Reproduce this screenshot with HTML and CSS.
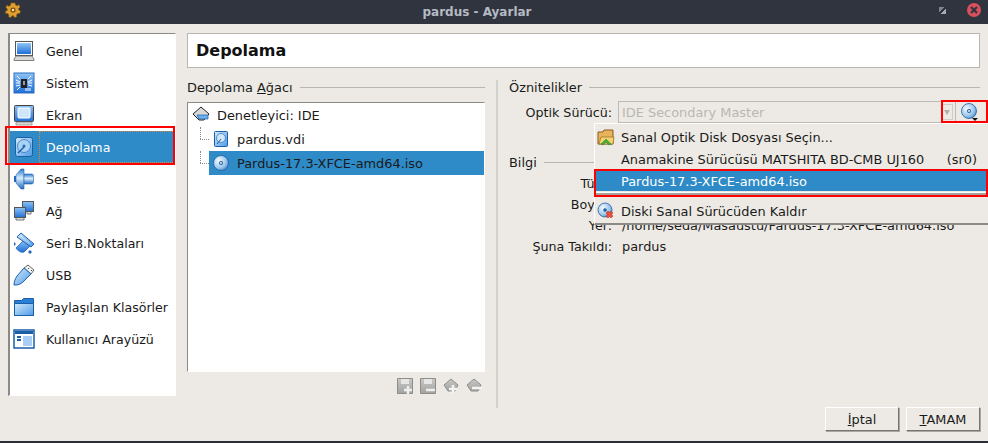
FILE: index.html
```html
<!DOCTYPE html>
<html lang="tr">
<head>
  <meta charset="UTF-8" />
  <title>pardus - Ayarlar</title>
  <link rel="stylesheet" href="styles.css">
</head>
<body>
  <svg class="defs" width="0" height="0">
    <defs>
      <linearGradient id="blue" x1="0" y1="0" x2="0" y2="1">
        <stop offset="0" stop-color="#8fc4f5"/>
        <stop offset="1" stop-color="#1f6fd8"/>
      </linearGradient>
      <linearGradient id="pale" x1="0" y1="0" x2="1" y2="1">
        <stop offset="0" stop-color="#d4ebfc"/>
        <stop offset="1" stop-color="#4d9ae6"/>
      </linearGradient>
      <linearGradient id="cone" x1="0" y1="0" x2="0" y2="1">
        <stop offset="0" stop-color="#2f78c8"/>
        <stop offset="0.45" stop-color="#d8eefc"/>
        <stop offset="1" stop-color="#2468bc"/>
      </linearGradient>
      <radialGradient id="disc" cx="0.35" cy="0.35" r="0.8">
        <stop offset="0" stop-color="#f4fbff"/>
        <stop offset="0.6" stop-color="#9cc7ec"/>
        <stop offset="1" stop-color="#3b78bf"/>
      </radialGradient>
      <linearGradient id="grey" x1="0" y1="0" x2="0" y2="1">
        <stop offset="0" stop-color="#c8c8c6"/>
        <stop offset="1" stop-color="#a2a2a0"/>
      </linearGradient>
    </defs>
  </svg>

  <header class="titlebar">
    <svg class="app-icon" width="16" height="16" viewBox="0 0 16 16">
      <path d="M6 1h4l.5 2 1.700.8 1.800-1 1 2.200-1.500 1.500.2 1.500 1.800 1-.8 2.500-2 0-1.200 1.300.3 2-2.300.7-1-1.700h-1.600l-1 1.700-2.300-.7.3-2-1.200-1.300-2 0L.4 9.500l1.800-1 .2-1.500L.9 5.500l1-2.200 1.800 1L5.500 3.500z" fill="#e0a030" stroke="#8a5a10" stroke-width=".6"/>
      <circle cx="8" cy="8" r="2.600" fill="#7a4a10"/>
      <circle cx="8" cy="8" r="1.300" fill="#fbe39a"/>
    </svg>
    <span class="win-title">pardus - Ayarlar</span>
    <span class="win-max"></span>
    <span class="win-close">
      <svg width="10" height="10" viewBox="0 0 10 10"><path d="M2 2l6 6M8 2l-6 6" stroke="#2f343f" stroke-width="2.200"/></svg>
    </span>
  </header>

  <main class="dialog">
    <nav class="sidebar">
      <div class="side-item">
        <svg class="side-icon" width="22" height="22" viewBox="0 0 22 22"><rect x="2.500" y="1.500" width="17" height="14" fill="#fff" stroke="#555"/><rect x="4" y="3" width="14" height="11" fill="url(#blue)"/><path d="M1 19l2-3h16l2 3v1.500H1z" fill="#d8d8d6" stroke="#666" stroke-width=".8"/></svg>
        <span>Genel</span>
      </div>
      <div class="side-item">
        <svg class="side-icon" width="22" height="22" viewBox="0 0 22 22"><rect x="1" y="1" width="20" height="20" fill="url(#blue)" stroke="#2b6cc0"/><path d="M3 8l4 2M3 11h4M3 14l4-1M15 10l4-2M15 11h4M15 13l4 1M4 4l3 3M18 4l-3 3M4 18l3-3M13 16v3M15 16v3M17 16v3" stroke="#fff"/><rect x="8" y="7" width="6" height="9" fill="#222"/><rect x="10" y="9" width="2" height="4" fill="#9a9a9a"/></svg>
        <span>Sistem</span>
      </div>
      <div class="side-item">
        <svg class="side-icon" width="22" height="22" viewBox="0 0 22 22"><rect x="1.500" y="1.500" width="19" height="16" rx="1" fill="url(#blue)" stroke="#444"/><rect x="5" y="4" width="12" height="10" rx="1" fill="#cfe6fb" stroke="#fff"/><rect x="3" y="18" width="16" height="3" fill="#d8d8d6" stroke="#777" stroke-width=".6"/></svg>
        <span>Ekran</span>
      </div>
      <div class="side-item selected">
        <svg class="side-icon" width="22" height="22" viewBox="0 0 22 22"><rect x="2.500" y="1.500" width="17" height="19" rx="2" fill="url(#pale)" stroke="#1a5ea8"/><circle cx="11" cy="10" r="6.500" fill="#a9d3f5" stroke="#256bb5" stroke-width=".7"/><circle cx="11" cy="10" r="1.500" fill="#256bb5"/><path d="M5 17l6-6" stroke="#1a5ea8" stroke-width="1.500"/></svg>
        <span class="side-label">Depolama</span>
      </div>
      <div class="side-item">
        <svg class="side-icon" width="22" height="22" viewBox="0 0 22 22"><path d="M1 8h2v6H1z" fill="#2468bc"/><path d="M3 7l5-6h3v20H8l-5-6z" fill="url(#cone)" stroke="#2468bc" stroke-width=".6"/><path d="M11 6h8a2 2 0 0 1 1.500 2v6a2 2 0 0 1-1.500 2h-8z" fill="url(#cone)" stroke="#2468bc" stroke-width=".6"/></svg>
        <span>Ses</span>
      </div>
      <div class="side-item">
        <svg class="side-icon" width="22" height="22" viewBox="0 0 22 22"><rect x="9.500" y="1.500" width="11" height="10" fill="url(#blue)" stroke="#555"/><rect x="1.500" y="7.500" width="11" height="10" fill="url(#blue)" stroke="#555"/><path d="M3 18v2h8v-2M14 12v2h4v-2" fill="#ddd" stroke="#777"/></svg>
        <span>Ağ</span>
      </div>
      <div class="side-item">
        <svg class="side-icon" width="22" height="22" viewBox="0 0 22 22"><path d="M3 16l8-8 6 6-6 6c-3 1-6-1-8-4z" fill="url(#blue)" stroke="#1f5fae" stroke-width=".8"/><path d="M8 1l13 11-3 3L4 5z" fill="url(#pale)" stroke="#1f5fae"/><path d="M8 4l9 8" stroke="#fff" stroke-dasharray="1 1.500"/><path d="M1 10l2 2-2 2zM15 20l2-2 2 2-2 2z" fill="#2468bc"/></svg>
        <span>Seri B.Noktaları</span>
      </div>
      <div class="side-item">
        <svg class="side-icon" width="22" height="22" viewBox="0 0 22 22"><path d="M15 1l6 5-3 4-7-6z" fill="#f2f2f0" stroke="#666"/><path d="M15 4l1 1M18 6l1 1" stroke="#444"/><path d="M11 4l7 6-8 8c-2 2-5 3-7 3l-2 0c0-3 1-6 3-9z" fill="url(#pale)" stroke="#1f5fae"/></svg>
        <span>USB</span>
      </div>
      <div class="side-item">
        <svg class="side-icon" width="22" height="22" viewBox="0 0 22 22"><path d="M1.500 19.500V4.500h7l2-2h10v17z" fill="#2a7fd6" stroke="#1a5ea8"/><path d="M1.500 7.500h19v12h-19z" fill="url(#pale)" stroke="#1a5ea8"/></svg>
        <span>Paylaşılan Klasörler</span>
      </div>
      <div class="side-item">
        <svg class="side-icon" width="22" height="22" viewBox="0 0 22 22"><rect x="1" y="2" width="20" height="18" fill="#fff" stroke="#1a5ea8" stroke-width="1.500"/><rect x="2" y="3" width="18" height="3" fill="#1a5ea8"/><rect x="10" y="8" width="9" height="10" fill="#a9cdf5"/><path d="M4 9h4M4 12h4" stroke="#1a5ea8" stroke-width="2"/></svg>
        <span>Kullanıcı Arayüzü</span>
      </div>
    </nav>

    <section class="page">
      <h1 class="page-title">Depolama</h1>
      <div class="panes">
        <div class="tree-pane">
          <div class="group-head"><span>Depolama <u>A</u>ğacı</span></div>
          <div class="tree">
            <div class="tree-row ctrl">
              <svg width="18" height="18" viewBox="0 0 18 18"><path d="M9 1l8 7-5 6H7L1 8z" fill="#d8d8d6" stroke="#222"/><path d="M5 9h11v4H7z" fill="#6ab0ee" stroke="#1a5ea8" stroke-width=".7"/></svg>
              <span>Denetleyici: IDE</span>
            </div>
            <div class="tree-row child">
              <svg width="16" height="18" viewBox="0 0 16 18"><rect x="1.500" y="1.500" width="13" height="15" rx="1" fill="url(#pale)" stroke="#1a5ea8"/><circle cx="8" cy="8" r="4.500" fill="#cfe6fb" stroke="#256bb5" stroke-width=".7"/><path d="M4 14l4-5" stroke="#1a5ea8"/></svg>
              <span>pardus.vdi</span>
            </div>
            <div class="tree-row child current">
              <svg width="16" height="16" viewBox="0 0 16 16"><circle cx="8" cy="8" r="7.500" fill="url(#disc)" stroke="#235e9e" stroke-width=".8"/><circle cx="8" cy="8" r="2" fill="#235e9e"/><circle cx="8" cy="8" r=".9" fill="#fff"/></svg>
              <span>Pardus-17.3-XFCE-amd64.iso</span>
            </div>
          </div>
          <div class="tree-tools">
            <svg width="16" height="16" viewBox="0 0 16 16"><path d="M.5.5h15v15H.5z" fill="url(#grey)" stroke="#8d8d8b"/><rect x="4" y="1" width="8" height="5" fill="#e6e6e4"/><path d="M7 12h8M11 8v8" stroke="#efefed" stroke-width="2.500"/></svg>
            <svg width="16" height="16" viewBox="0 0 16 16"><path d="M.5.5h15v15H.5z" fill="url(#grey)" stroke="#8d8d8b"/><rect x="4" y="1" width="8" height="5" fill="#e6e6e4"/><path d="M6 12h9" stroke="#efefed" stroke-width="2.500"/></svg>
            <svg width="16" height="16" viewBox="0 0 16 16"><path d="M8 1l7 6-3 6H5L1 7z" fill="url(#grey)" stroke="#8d8d8b"/><path d="M6 11h8M10 7v8" stroke="#f4f4f2" stroke-width="2.500"/></svg>
            <svg width="16" height="16" viewBox="0 0 16 16"><path d="M8 1l7 6-3 6H5L1 7z" fill="url(#grey)" stroke="#8d8d8b"/><path d="M6 10h10" stroke="#f4f4f2" stroke-width="2.500"/></svg>
          </div>
        </div>

        <div class="attr-pane">
          <div class="group-head"><span>Öznitelikler</span></div>
          <div class="attr-row drive">
            <span class="attr-key">Optik Sürücü:</span>
            <div class="combo">
              <span>IDE Secondary Master</span>
              <span class="combo-arrow"></span>
            </div>
            <svg class="cd-btn" width="20" height="20" viewBox="0 0 20 20"><circle cx="9" cy="9" r="7.500" fill="url(#disc)" stroke="#235e9e" stroke-width=".8"/><circle cx="9" cy="9" r="2" fill="#235e9e"/><circle cx="9" cy="9" r=".9" fill="#fff"/><path d="M12 16h6l-3 3z" fill="#111"/></svg>
          </div>
          <div class="group-head info-head"><span>Bilgi</span></div>
          <div class="attr-row"><span class="attr-key">Türü:</span></div>
          <div class="attr-row"><span class="attr-key">Boyut:</span></div>
          <div class="attr-row"><span class="attr-key">Yer:</span><span class="attr-val">/home/seda/Masaüstü/Pardus-17.3-XFCE-amd64.iso</span></div>
          <div class="attr-row"><span class="attr-key">Şuna Takıldı:</span><span class="attr-val">pardus</span></div>
        </div>
      </div>
    </section>
  </main>

  <footer class="actions">
    <button class="btn"><u>İ</u>ptal</button>
    <button class="btn"><u>T</u>AMAM</button>
  </footer>
  <div class="screen-edge"></div>

  <ul class="popup">
    <li>
      <svg width="18" height="18" viewBox="0 0 18 18"><path d="M1 16V4h5l1-2h9v14z" fill="#e8b45a" stroke="#8a5a20"/><path d="M2 16l2-7h13l-1 7z" fill="#f3d36c" stroke="#8a5a20" stroke-width=".6"/><path d="M4 16l5-5 5 5-2 1-3-3-3 3z" fill="#48b03a" stroke="#2c7a22" stroke-width=".5"/></svg>
      <span>Sanal Optik Disk Dosyası Seçin...</span>
    </li>
    <li class="host"><span>Anamakine Sürücüsü MATSHITA BD-CMB UJ160</span><span>(sr0)</span></li>
    <li class="active"><span>Pardus-17.3-XFCE-amd64.iso</span></li>
    <li class="sep"></li>
    <li>
      <svg width="18" height="18" viewBox="0 0 18 18"><circle cx="8" cy="8" r="7" fill="url(#disc)" stroke="#235e9e" stroke-width=".8"/><circle cx="8" cy="8" r="1.800" fill="#235e9e"/><path d="M9 11l2-2 1.500 1.500L14 9l2 2-1.500 1.500L16 14l-2 2-1.500-1.500L11 16l-2-2 1.500-1.500z" fill="#e8503a" stroke="#a02818" stroke-width=".5"/></svg>
      <span>Diski Sanal Sürücüden Kaldır</span>
    </li>
  </ul>

  <div class="mark mark-side"></div>
  <div class="mark mark-cd"></div>
  <div class="mark mark-item"></div>
</body>
</html>
```

FILE: styles.css
```css
* {
  box-sizing: border-box;
}
html, body {
  margin: 0;
  padding: 0;
}
body {
  position: relative;
  width: 988px;
  height: 443px;
  overflow: hidden;
  display: flex;
  flex-direction: column;
  background-color: #edeae5;
  font-family: "DejaVu Sans", sans-serif;
  font-size: 12px;
  color: #1a1a1a;
}
.defs {
  position: absolute;
}
.titlebar {
  flex: none;
  height: 24px;
  padding-right: 34px;
  display: flex;
  align-items: center;
  justify-content: center;
  position: relative;
  background-color: #2f343f;
}
.win-title {
  color: #b6bac3;
  font-weight: bold;
}
.app-icon {
  position: absolute;
  left: 5px;
  top: 2px;
}
.win-max {
  position: absolute;
  left: 939px;
  top: 7px;
  width: 7px;
  height: 7px;
  background: linear-gradient(135deg, #7d828c 0 40%, transparent 40% 60%, #a6aab2 60%);
}
.win-close {
  position: absolute;
  left: 967px;
  top: 3px;
  width: 14px;
  height: 14px;
  border-radius: 50%;
  background-color: #d9505c;
  display: flex;
  align-items: center;
  justify-content: center;
}
.dialog {
  flex: none;
  height: 372px;
  padding: 9px 8px 0;
  display: flex;
  gap: 11px;
}
.sidebar {
  flex: none;
  width: 168px;
  height: 363px;
  padding-top: 1px;
  background: #fff;
  border: 1px solid #fff;
  border-top: 1px solid #8c8a86;
  border-left: 2px solid #8c8a86;
}
.side-item {
  height: 32px;
  display: flex;
  align-items: center;
  gap: 11px;
  padding-left: 3px;
  font-size: 12.6px;
}
.side-item.selected {
  background-color: #2e8bc7;
  color: #fff;
}
.side-label {
  flex: 1;
  align-self: stretch;
  display: flex;
  align-items: center;
  margin-left: -7px;
  padding-left: 6px;
  border: 1px dotted #d98a3a;
}
.side-icon {
  flex: none;
}
.page {
  flex: 1;
  min-width: 0;
}
.page-title {
  margin: 0;
  height: 35px;
  padding-left: 8px;
  display: flex;
  align-items: center;
  font-size: 16px;
  background: #fff;
  border: 1px solid #b9b6b1;
  color: #111;
}
.panes {
  display: flex;
  height: 328px;
  margin-top: 12px;
}
.tree-pane {
  flex: none;
  width: 298px;
}
.group-head {
  height: 14px;
  display: flex;
  align-items: center;
  gap: 7px;
  font-size: 12.9px;
}
.group-head::after {
  content: "";
  flex: 1;
  height: 1px;
  background-color: #b9b6b1;
}
.tree {
  height: 270px;
  margin-top: 8px;
  background: #fff;
  border-top: 1px solid #8c8a86;
  border-left: 1px solid #8c8a86;
  border-right: 1px solid #fff;
  border-bottom: 1px solid #fff;
  font-size: 12.9px;
}
.tree-row {
  position: relative;
  height: 24px;
  display: flex;
  align-items: center;
  gap: 7px;
  padding-left: 4px;
}
.tree-row.child {
  margin-left: 21px;
  padding-left: 4px;
  gap: 8px;
}
.tree-row.child::before {
  content: "";
  position: absolute;
  left: -9px;
  top: 12px;
  width: 9px;
  border-top: 1px dotted #8c8a86;
}
.tree-row.child::after {
  content: "";
  position: absolute;
  left: -9px;
  top: 0;
  height: 12px;
  border-left: 1px dotted #8c8a86;
}
.tree-row.current {
  background-color: #2e8bc7;
}
.tree-tools {
  display: flex;
  justify-content: flex-end;
  gap: 7px;
  padding: 6px 3px 0 0;
}
.attr-pane {
  flex: 1;
  min-width: 0;
  margin-left: 11px;
  padding-left: 11px;
  border-left: 2px solid #d4d1cc;
  font-size: 12.7px;
}
.attr-pane .group-head {
  font-size: 12.9px;
}
.attr-row {
  display: flex;
  align-items: center;
  height: 21px;
  gap: 6px;
}
.attr-row.drive {
  height: 24px;
  margin-top: 6px;
  margin-bottom: 31px;
}
.attr-key {
  flex: none;
  width: 103px;
  text-align: right;
}
.attr-val {
  padding-left: 4px;
  white-space: nowrap;
  font-size: 12.9px;
}
.combo {
  flex: none;
  width: 338px;
  height: 22px;
  display: flex;
  align-items: center;
  justify-content: space-between;
  padding: 0 2px 0 3px;
  border: 1px solid #bdbab5;
  color: #b9b7b2;
  background-color: #edeae5;
  font-size: 12.9px;
}
.combo-arrow {
  width: 11px;
  height: 16px;
  border: 1px solid #cfccc7;
  position: relative;
}
.combo-arrow::after {
  content: "";
  position: absolute;
  left: 1px;
  top: 5px;
  border: 3.500px solid transparent;
  border-top: 5px solid #b0aeaa;
  border-bottom: 0;
}
.cd-btn {
  margin-left: -2px;
}
.info-head {
  margin-bottom: 4px;
}
.actions {
  flex: 1;
  display: flex;
  justify-content: flex-end;
  align-items: flex-start;
  gap: 7px;
  padding: 11px 8px 0 0;
}
.btn {
  width: 74px;
  height: 24px;
  padding: 0;
  font-family: inherit;
  font-size: 12.9px;
  color: #1a1a1a;
  background-color: #edeae5;
  border: 1px solid #fff;
  border-right-color: #77756f;
  border-bottom-color: #77756f;
  box-shadow: 1px 1px 0 #aaa7a2;
}
.screen-edge {
  flex: none;
  height: 2px;
  background-color: #2b2e37;
}
.popup {
  position: absolute;
  left: 594px;
  top: 123px;
  width: 394px;
  height: 102px;
  margin: 0;
  padding: 2px 0 0 0;
  list-style: none;
  background-color: #edeae5;
  border-left: 1px solid #fff;
  border-top: 1px solid #fff;
  border-bottom: 2px solid #8c8a86;
  font-size: 12.9px;
}
.popup li {
  position: relative;
  height: 22px;
  padding-left: 26px;
  display: flex;
  align-items: center;
}
.popup svg {
  position: absolute;
  left: 2px;
  top: 2px;
}
.popup .host {
  justify-content: space-between;
  padding-right: 11px;
}
.popup .active {
  height: 20px;
  margin-top: 1px;
  background-color: #2e8bc7;
  color: #fff;
}
.popup .sep {
  height: 7px;
  margin-top: 2px;
  border-top: 2px solid #a5a39e;
  box-shadow: 0 -1px 0 #fff;
}
.mark {
  position: absolute;
  border: 2px solid #f00;
}
.mark-side {
  left: 5px;
  top: 126px;
  width: 170px;
  height: 39px;
}
.mark-cd {
  left: 941px;
  top: 100px;
  width: 47px;
  height: 23px;
}
.mark-item {
  left: 594px;
  top: 169px;
  width: 394px;
  height: 28px;
}
```
